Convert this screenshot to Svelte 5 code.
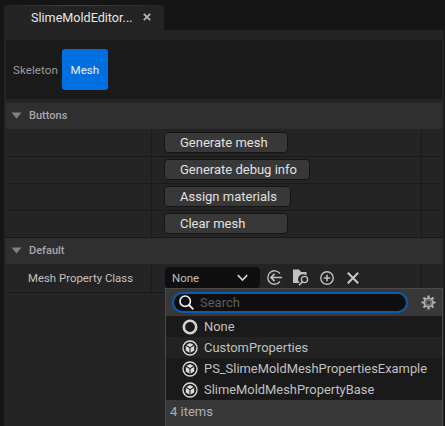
<script>
  const buttons = [
    { label: 'Generate mesh', width: 124 },
    { label: 'Generate debug info', width: 146 },
    { label: 'Assign materials', width: 127 },
    { label: 'Clear mesh', width: 124 },
  ];

  const items = [
    { label: 'None', none: true },
    { label: 'CustomProperties', alt: true },
    { label: 'PS_SlimeMoldMeshPropertiesExample' },
    { label: 'SlimeMoldMeshPropertyBase' },
  ];
</script>

{#snippet caret()}
  <svg class="caret" width="11" height="7" viewBox="0 0 11 7">
    <path d="M0.5 0.5H10.5L5.5 6.5Z" fill="#808080" />
  </svg>
{/snippet}

<div class="editor">
  <div class="tabbar">
    <div class="tab">
      <span class="tab-title">SlimeMoldEditor...</span>
      <svg width="8" height="8" viewBox="0 0 8 8">
        <path d="M0.8 0.8L7.2 7.2M7.2 0.8L0.8 7.2" stroke="#b5b5b5" stroke-width="1.8" />
      </svg>
    </div>
  </div>

  <div class="body">
    <div class="modes">
      <span class="mode">Skeleton</span>
      <span class="mode active">Mesh</span>
    </div>

    <div class="details">
      <div class="header">{@render caret()}<span>Buttons</span></div>
      {#each buttons as b}
        <div class="row">
          <div class="name"></div>
          <div class="value">
            <button type="button" style="width: {b.width}px">{b.label}</button>
          </div>
          <div class="extra"></div>
        </div>
      {/each}
      <div class="header">{@render caret()}<span>Default</span></div>
      <div class="row tall">
        <div class="name">Mesh Property Class</div>
        <div class="value">
          <div class="combo">
            <span>None</span>
            <svg width="11" height="8" viewBox="0 0 11 8">
              <path d="M0.8 1.2L5.5 6L10.2 1.2" fill="none" stroke="#d0d0d0" stroke-width="1.7" />
            </svg>
          </div>
          <div class="tools">
            <svg width="15" height="15" viewBox="0 0 15 15" fill="none" stroke="#c0c0c0">
              <path d="M12.9 3.5A6.7 6.7 0 1 0 12.9 11.5" stroke-width="1.4" />
              <path d="M15 7.5H4M7.6 3.9L4 7.5L7.6 11.1" stroke-width="1.7" />
            </svg>
            <svg width="16" height="17" viewBox="0 0 16 17">
              <path d="M0 0.5H6L8 3H13.5V6.4A4.6 4.6 0 0 0 6.8 14H0Z" fill="#c0c0c0" />
              <circle cx="11.5" cy="10.5" r="3.1" fill="none" stroke="#c0c0c0" stroke-width="1.3" />
              <path d="M9.3 12.8L6 16.3" stroke="#c0c0c0" stroke-width="1.6" />
            </svg>
            <svg width="14" height="14" viewBox="0 0 14 14" fill="none" stroke="#c0c0c0">
              <circle cx="7" cy="7" r="6.2" stroke-width="1.4" />
              <path d="M7 3.8V10.2M3.8 7H10.2" stroke-width="1.6" />
            </svg>
            <svg class="clear" width="12" height="12" viewBox="0 0 12 12" fill="none" stroke="#c8c8c8">
              <path d="M0.8 0.8L11.2 11.2M11.2 0.8L0.8 11.2" stroke-width="2" />
            </svg>
          </div>
        </div>
        <div class="extra"></div>
      </div>
    </div>
  </div>

  <div class="popup">
    <div class="search-row">
      <div class="search">
        <svg width="15" height="15" viewBox="0 0 15 15" fill="none" stroke="#f0f0f0">
          <circle cx="6.2" cy="6.2" r="5.2" stroke-width="1.6" />
          <path d="M10 10L14.3 14.3" stroke-width="1.9" />
        </svg>
        <span>Search</span>
      </div>
      <svg class="gear" width="15" height="15" viewBox="0 0 15 15">
        <g stroke="#b0b0b0" stroke-width="2.2">
          <path d="M7.5 0.5V14.5M0.5 7.5H14.5M2.5 2.5L12.5 12.5M12.5 2.5L2.5 12.5" />
        </g>
        <circle cx="7.5" cy="7.5" r="4.4" fill="#6c6c6c" stroke="#b0b0b0" stroke-width="1.4" />
        <circle cx="7.5" cy="7.5" r="1.7" fill="#3a3a3a" />
      </svg>
    </div>
    <div class="list">
      {#each items as item}
        <div class="item" class:alt={item.alt}>
          {#if item.none}
            <svg width="16" height="16" viewBox="0 0 16 16" fill="none">
              <circle cx="8" cy="8" r="6.2" stroke="#d4d4d4" stroke-width="2.6" />
            </svg>
          {:else}
            <svg width="16" height="16" viewBox="0 0 16 16">
              <circle cx="8" cy="8" r="7" fill="none" stroke="#dcdcdc" stroke-width="1.3" />
              <path d="M8 3L12.2 5.3V10.4L8 12.9L3.8 10.4V5.3Z" fill="#dcdcdc" />
              <path d="M3.8 5.3L8 7.7L12.2 5.3M8 7.7V12.9" fill="none" stroke="#1c1c1c" stroke-width="1.1" />
            </svg>
          {/if}
          <span>{item.label}</span>
        </div>
      {/each}
    </div>
    <div class="count">4 items</div>
  </div>
</div>

<style>
  :global(body) {
    margin: 0;
    background: #151515;
  }

  .editor {
    position: relative;
    width: 445px;
    height: 426px;
    overflow: hidden;
    background: #151515;
    font-family: Roboto, "Liberation Sans", sans-serif;
    font-size: 12px;
    color: #c0c0c0;
  }

  .tabbar {
    height: 30px;
    padding: 5px 0 0 4px;
    box-sizing: border-box;
  }

  .tab {
    position: relative;
    width: 160px;
    height: 25px;
    box-sizing: border-box;
    display: flex;
    align-items: center;
    gap: 10px;
    padding: 0 0 1px 27px;
    background: #242424;
    border-radius: 4px 4px 0 0;
  }

  .tab::before {
    content: '';
    position: absolute;
    left: 0;
    right: 0;
    top: 0;
    height: 1px;
    background: linear-gradient(90deg, #242424, #1e4a78 45%, #242424);
  }

  .tab-title {
    color: #e6e6e6;
    font-size: 12.6px;
  }

  .body {
    margin-left: 4px;
    margin-right: 1px;
    padding: 10px 0 0 2px;
    background: #242424;
    height: 396px;
    box-sizing: border-box;
  }

  .modes {
    height: 59px;
    margin-right: 2px;
    background: #1a1a1a;
    display: flex;
    align-items: center;
    gap: 4px;
    padding-left: 7px;
  }

  .mode {
    color: #9a9a9a;
    font-size: 11.5px;
    letter-spacing: 0.1px;
  }

  .mode.active {
    width: 46px;
    height: 41px;
    display: flex;
    align-items: center;
    justify-content: center;
    border-radius: 3px;
    background: #0070e0;
    color: #f0f0f0;
  }

  .details {
    margin-top: 4px;
    margin-right: 2px;
  }

  .header {
    height: 26px;
    box-sizing: border-box;
    margin-bottom: 1px;
    padding: 0 0 1px 5px;
    background: #2f2f2f;
    display: flex;
    align-items: center;
    gap: 7px;
    font-weight: 500;
    font-size: 11px;
    color: #a8a8a8;
  }

  .row {
    height: 26px;
    display: flex;
    background: #242424;
    border-bottom: 1px solid #1a1a1a;
  }

  .row.tall {
    height: 27px;
  }

  .name {
    width: 146px;
    flex-shrink: 0;
    border-right: 1px solid #1a1a1a;
    padding: 0 0 2px 22px;
    box-sizing: border-box;
    display: flex;
    align-items: center;
    color: #c0c0c0;
    font-size: 11.4px;
  }

  .value {
    flex: 1;
    display: flex;
    align-items: flex-start;
    padding: 2px 0 0 12px;
  }

  .extra {
    width: 21px;
    box-sizing: border-box;
    border-left: 1px solid #1a1a1a;
  }

  button {
    height: 21px;
    box-sizing: border-box;
    padding: 0 0 0 15px;
    text-align: left;
    border: 1px solid #151515;
    border-radius: 4px;
    background: #383838;
    color: #e0e0e0;
    font-family: inherit;
    font-size: 13px;
  }

  .combo {
    width: 95px;
    height: 21px;
    margin-left: 1px;
    box-sizing: border-box;
    display: flex;
    align-items: center;
    justify-content: space-between;
    padding: 0 12px 0 7px;
    background: #0f0f0f;
    border-radius: 4px;
    font-size: 11.5px;
  }

  .tools {
    display: flex;
    align-items: center;
    height: 21px;
    gap: 11px;
    margin-left: 7px;
  }

  .clear {
    margin-left: 2px;
  }

  .popup {
    position: absolute;
    left: 165px;
    top: 288px;
    width: 278px;
    height: 138px;
    box-sizing: border-box;
    border: 1px solid #4a4a4a;
    border-bottom: 0;
    background: #383838;
  }

  .search-row {
    height: 27px;
    display: flex;
    align-items: center;
    padding-left: 6px;
    gap: 13px;
  }

  .search {
    width: 236px;
    height: 21px;
    box-sizing: border-box;
    display: flex;
    align-items: center;
    gap: 6px;
    padding-left: 5px;
    border: 2px solid #0a5cb0;
    border-radius: 11px;
    background: #0f0f0f;
    color: #5e5e5e;
    font-size: 13px;
  }

  .list {
    background: #1a1a1a;
    height: 84px;
  }

  .item {
    height: 21px;
    display: flex;
    align-items: center;
    gap: 6px;
    padding-left: 16px;
    color: #c0c0c0;
    font-size: 12.9px;
  }

  .item.alt {
    background: #222222;
  }

  .count {
    height: 26px;
    box-sizing: border-box;
    display: flex;
    align-items: center;
    padding: 0 0 4px 4px;
    font-size: 13px;
    color: #b0b0b0;
  }
</style>
